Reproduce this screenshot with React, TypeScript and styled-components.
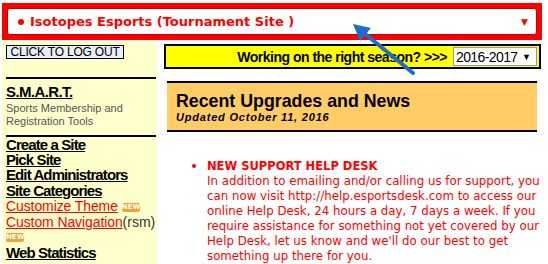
import React from "react";
import styled, { createGlobalStyle } from "styled-components";

const GlobalStyle = createGlobalStyle`
  html, body { margin: 0; padding: 0; background: #fff; }
  body { width: 548px; height: 264px; overflow: hidden; font-family: "Liberation Sans", Arial, sans-serif; }
`;

const Page = styled.div`
  position: relative;
  width: 548px;
  height: 264px;
  overflow: hidden;
`;

const Header = styled.div`
  margin: 3px 6px 0 2px;
  background: #ff0000;
  padding: 5px;
`;

const SiteSelect = styled.div`
  height: 27px;
  box-sizing: border-box;
  background: #fff;
  border-radius: 3px;
  border: 1px solid #c40000;
  display: flex;
  align-items: center;
  padding: 0 8px 0 10px;
  color: #ff0000;
  font-family: "DejaVu Sans", Verdana, sans-serif;
  font-weight: bold;
  font-size: 13px;
`;

const Dot = styled.span`
  display: inline-block;
  width: 6px;
  height: 6px;
  border-radius: 50%;
  background: #ff0000;
  margin-right: 6px;
`;

const Title = styled.span`
  flex: 1;
`;

const Caret = styled.span`
  font-size: 9px;
  font-weight: normal;
`;

const Body = styled.div`
  display: grid;
  grid-template-columns: 155px 1fr;
  column-gap: 7px;
  margin: 1px 7px 0 2px;
  height: 223px;
`;

const Sidebar = styled.div`
  background: #ffffcc;
  padding: 4px 0 0 4px;
`;

const LogoutButton = styled.button`
  display: block;
  box-sizing: border-box;
  height: 14px;
  width: 118px;
  padding: 0;
  border: 1px solid #000;
  background: #e9eef4;
  font-family: "Liberation Sans", Arial, sans-serif;
  font-size: 12px;
  letter-spacing: -0.2px;
  line-height: 12px;
  white-space: nowrap;
  color: #000;
  text-align: center;
`;

const Rule = styled.div<{ $top: number }>`
  height: 2px;
  background: #000;
  margin: ${(p) => p.$top}px 0 0 0;
  width: 150px;
`;

const SmartBlock = styled.div`
  padding: 5px 0 7px;
`;

const SmartTitle = styled.a`
  display: block;
  font-family: "Liberation Sans", Arial, sans-serif;
  font-weight: bold;
  font-size: 15px;
  line-height: 16px;
  letter-spacing: -0.6px;
  color: #000;
  text-decoration: underline;
`;

const SmartSub = styled.div`
  font-family: "Liberation Sans", Arial, sans-serif;
  font-size: 11px;
  line-height: 13px;
  color: #555;
  margin-top: 2px;
`;

const NavList = styled.div`
  padding-top: 0;
  font-family: "Liberation Sans", Arial, sans-serif;
  font-size: 15px;
  line-height: 15.2px;
`;

const NavLink = styled.a<{ $red?: boolean }>`
  color: ${(p) => (p.$red ? "#ff0000" : "#000")};
  font-weight: ${(p) => (p.$red ? "normal" : "bold")};
  font-size: ${(p) => (p.$red ? "14px" : "15px")};
  letter-spacing: ${(p) => (p.$red ? "-0.1px" : "-0.9px")};
  text-decoration: underline;
`;

const NavRow = styled.div`
  white-space: nowrap;
`;

const Plain = styled.span`
  font-weight: normal;
  font-size: 14px;
  color: #333;
`;

const NewBadge = styled.span`
  display: inline-block;
  vertical-align: 2px;
  margin-left: 4px;
  width: 18px;
  height: 9px;
  border-radius: 2px;
  background: #f0a232;
  color: #fff;
  font-family: "DejaVu Sans", Verdana, sans-serif;
  font-size: 7px;
  font-weight: bold;
  line-height: 9px;
  text-align: center;
`;

const BadgeRow = styled.div`
  height: 15.2px;
  display: flex;
  align-items: center;
  & > span { margin-left: 0; }
`;

const Main = styled.div`
  padding-top: 3px;
`;

const SeasonBar = styled.div`
  height: 25px;
  box-sizing: border-box;
  background: #ffff00;
  border: 2px solid #000;
  display: flex;
  align-items: center;
  justify-content: flex-end;
  padding-right: 2px;
  gap: 6px;
  font-family: "Liberation Sans", Arial, sans-serif;
  font-weight: bold;
  font-size: 14px;
  letter-spacing: -0.5px;
  white-space: nowrap;
`;

const SeasonSelect = styled.div`
  height: 19px;
  width: 84px;
  box-sizing: border-box;
  background: #fff;
  border: 1px solid #999;
  display: flex;
  align-items: center;
  justify-content: space-between;
  padding: 0 5px 0 2px;
  font-weight: normal;
  font-size: 14px;
  letter-spacing: -0.6px;
  color: #000;
`;

const SmallCaret = styled.span`
  font-size: 9px;
  letter-spacing: 0;
`;

const NewsBox = styled.div`
  margin: 12px 4px 0 3px;
  height: 51px;
  box-sizing: border-box;
  background: #ffcc66;
  border-top: 2px solid #000;
  border-bottom: 2px solid #000;
  padding: 8px 9px 0;
`;

const NewsTitle = styled.div`
  font-family: "Liberation Sans", Arial, sans-serif;
  font-weight: bold;
  font-size: 17.8px;
  line-height: 20px;
  color: #000;
`;

const NewsDate = styled.div`
  font-family: "Liberation Sans", Arial, sans-serif;
  font-weight: bold;
  font-style: italic;
  font-size: 11px;
  letter-spacing: 0.8px;
  line-height: 13px;
  color: #000;
`;

const Items = styled.ul`
  margin: 26px 0 0;
  padding: 0 0 0 43px;
  color: #ff0000;
  font-family: "DejaVu Sans", Verdana, sans-serif;
  font-size: 11.8px;
  line-height: 15px;
`;

const Item = styled.li`
  &::marker { font-size: 13px; }
`;

const ItemHead = styled.div`
  font-weight: bold;
  font-size: 11.5px;
`;

const Arrow = styled.svg`
  position: absolute;
  left: 0;
  top: 0;
  pointer-events: none;
`;

export default function App() {
  return (
    <>
      <GlobalStyle />
      <Page>
        <Header>
          <SiteSelect>
            <Dot />
            <Title>Isotopes Esports (Tournament Site )</Title>
            <Caret>▼</Caret>
          </SiteSelect>
        </Header>
        <Body>
          <Sidebar>
            <LogoutButton>CLICK TO LOG OUT</LogoutButton>
            <Rule $top={18} />
            <SmartBlock>
              <SmartTitle>S.M.A.R.T.</SmartTitle>
              <SmartSub>
                Sports Membership and
                <br />
                Registration Tools
              </SmartSub>
            </SmartBlock>
            <Rule $top={0} />
            <NavList>
              <NavRow><NavLink>Create a Site</NavLink></NavRow>
              <NavRow><NavLink>Pick Site</NavLink></NavRow>
              <NavRow><NavLink>Edit Administrators</NavLink></NavRow>
              <NavRow><NavLink>Site Categories</NavLink></NavRow>
              <NavRow>
                <NavLink $red>Customize Theme</NavLink>
                <NewBadge>NEW</NewBadge>
              </NavRow>
              <NavRow>
                <NavLink $red>Custom Navigation</NavLink>
                <Plain>(rsm)</Plain>
              </NavRow>
              <BadgeRow><NewBadge>NEW</NewBadge></BadgeRow>
              <NavRow><NavLink>Web Statistics</NavLink></NavRow>
            </NavList>
          </Sidebar>
          <Main>
            <SeasonBar>
              <span>Working on the right season? &gt;&gt;&gt;</span>
              <SeasonSelect>
                <span>2016-2017</span>
                <SmallCaret>▼</SmallCaret>
              </SeasonSelect>
            </SeasonBar>
            <NewsBox>
              <NewsTitle>Recent Upgrades and News</NewsTitle>
              <NewsDate>Updated October 11, 2016</NewsDate>
            </NewsBox>
            <Items>
              <Item>
                <ItemHead>NEW SUPPORT HELP DESK</ItemHead>
                In addition to emailing and/or calling us for support, you can now visit http://help.esportsdesk.com to access our online Help Desk, 24 hours a day, 7 days a week. If you require assistance for something not yet covered by our Help Desk, let us know and we'll do our best to get something up there for you.
              </Item>
            </Items>
          </Main>
        </Body>
        <Arrow width="548" height="264" viewBox="0 0 548 264">
          <line x1="413" y1="73" x2="364" y2="33" stroke="#1e6dcb" strokeWidth="4" strokeLinecap="round" />
          <polygon points="353,24 371,28 360,41" fill="#1e6dcb" />
        </Arrow>
      </Page>
    </>
  );
}
